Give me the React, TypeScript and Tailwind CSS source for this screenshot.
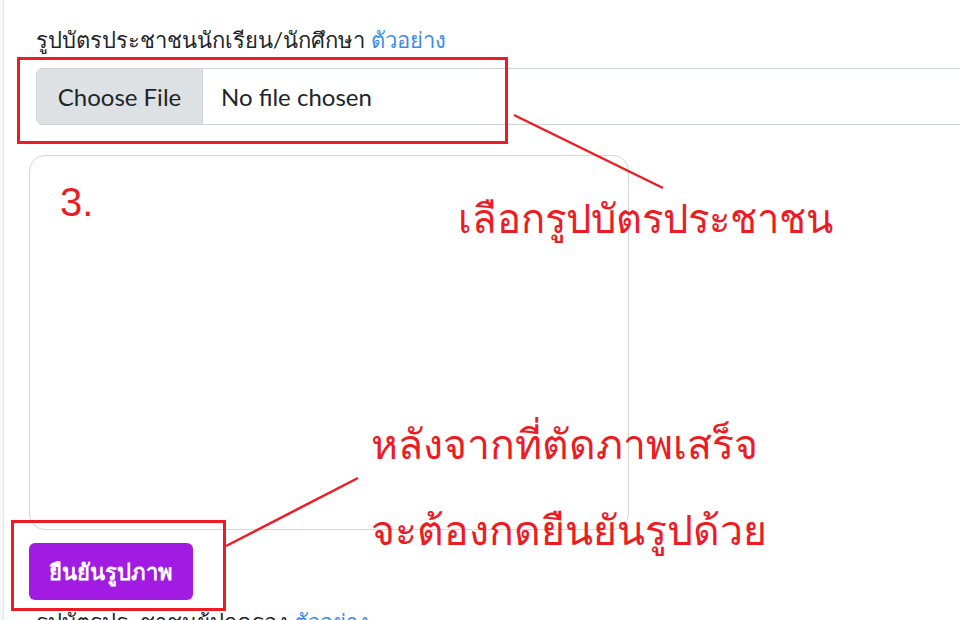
export default function App() {
  const red = '#ed1c24';
  return (
    <div className="relative h-[620px] w-[960px] overflow-hidden bg-white font-['Lato','Liberation_Sans',sans-serif]">
      <div className="flex h-full">
        <div className="w-[4px] shrink-0 border-r border-[#e3e5e8] bg-[#f6f7f9]" />
        <div className="flex-1 pt-[25px] pl-[32px]">
          <label className="block text-[22px] leading-[30px] text-[#212529]">
            รูปบัตรประชาชนนักเรียน/นักศึกษา <a className="text-[#3b8ce8]">ตัวอย่าง</a>
          </label>
          <div className="mt-[13px] flex h-[57px] w-[1000px] overflow-hidden rounded-[6px] border border-[#ced4da]">
            <div className="flex w-[166px] items-center justify-center border-r border-[#ced4da] bg-[#dee1e4] text-[24px] text-[#212529]">
              Choose File
            </div>
            <div className="flex items-center pl-[18px] text-[24px] text-[#212529]">No file chosen</div>
          </div>
          <div className="mt-[30px] -ml-[7px] h-[375px] w-[600px] rounded-[16px] border border-[#d6d6d6] pt-[26px] pl-[30px]">
            <span className="font-['Liberation_Sans',sans-serif] text-[40px] leading-[40px] font-light text-[#ed1c24]">3.</span>
          </div>
          <button className="mt-[13px] -ml-[7px] h-[57px] w-[164px] rounded-[6px] bg-[#a21be2] text-[22px] font-bold text-white">
            ยืนยันรูปภาพ
          </button>
          <div className="mt-[7px] text-[22px] leading-[30px] text-[#212529]">
            รูปบัตรประชาชนผู้ปกครอง <span className="text-[#3b8ce8]">ตัวอย่าง</span>
          </div>
        </div>
      </div>

      {/* annotations */}
      <div className="absolute left-[17px] top-[57px] h-[87px] w-[491px] border-[3px] border-[#ed1c24]" />
      <div className="absolute left-[11px] top-[520px] h-[91px] w-[215px] border-[3px] border-[#ed1c24]" />
      <svg className="absolute inset-0" width="960" height="620">
        <line x1="514" y1="115" x2="663" y2="188" stroke={red} strokeWidth="2.5" />
        <line x1="226" y1="546" x2="358" y2="478" stroke={red} strokeWidth="2.5" />
      </svg>
      <div className="absolute left-[458px] top-[188px] text-[40px] leading-[60px] font-light text-[#ed1c24]">เลือกรูปบัตรประชาชน</div>
      <div className="absolute left-[371px] top-[414px] text-[41px] leading-[60px] font-light text-[#ed1c24]">หลังจากที่ตัดภาพเสร็จ</div>
      <div className="absolute left-[371px] top-[500px] text-[41px] leading-[60px] font-light text-[#ed1c24]">จะต้องกดยืนยันรูปด้วย</div>
    </div>
  );
}
